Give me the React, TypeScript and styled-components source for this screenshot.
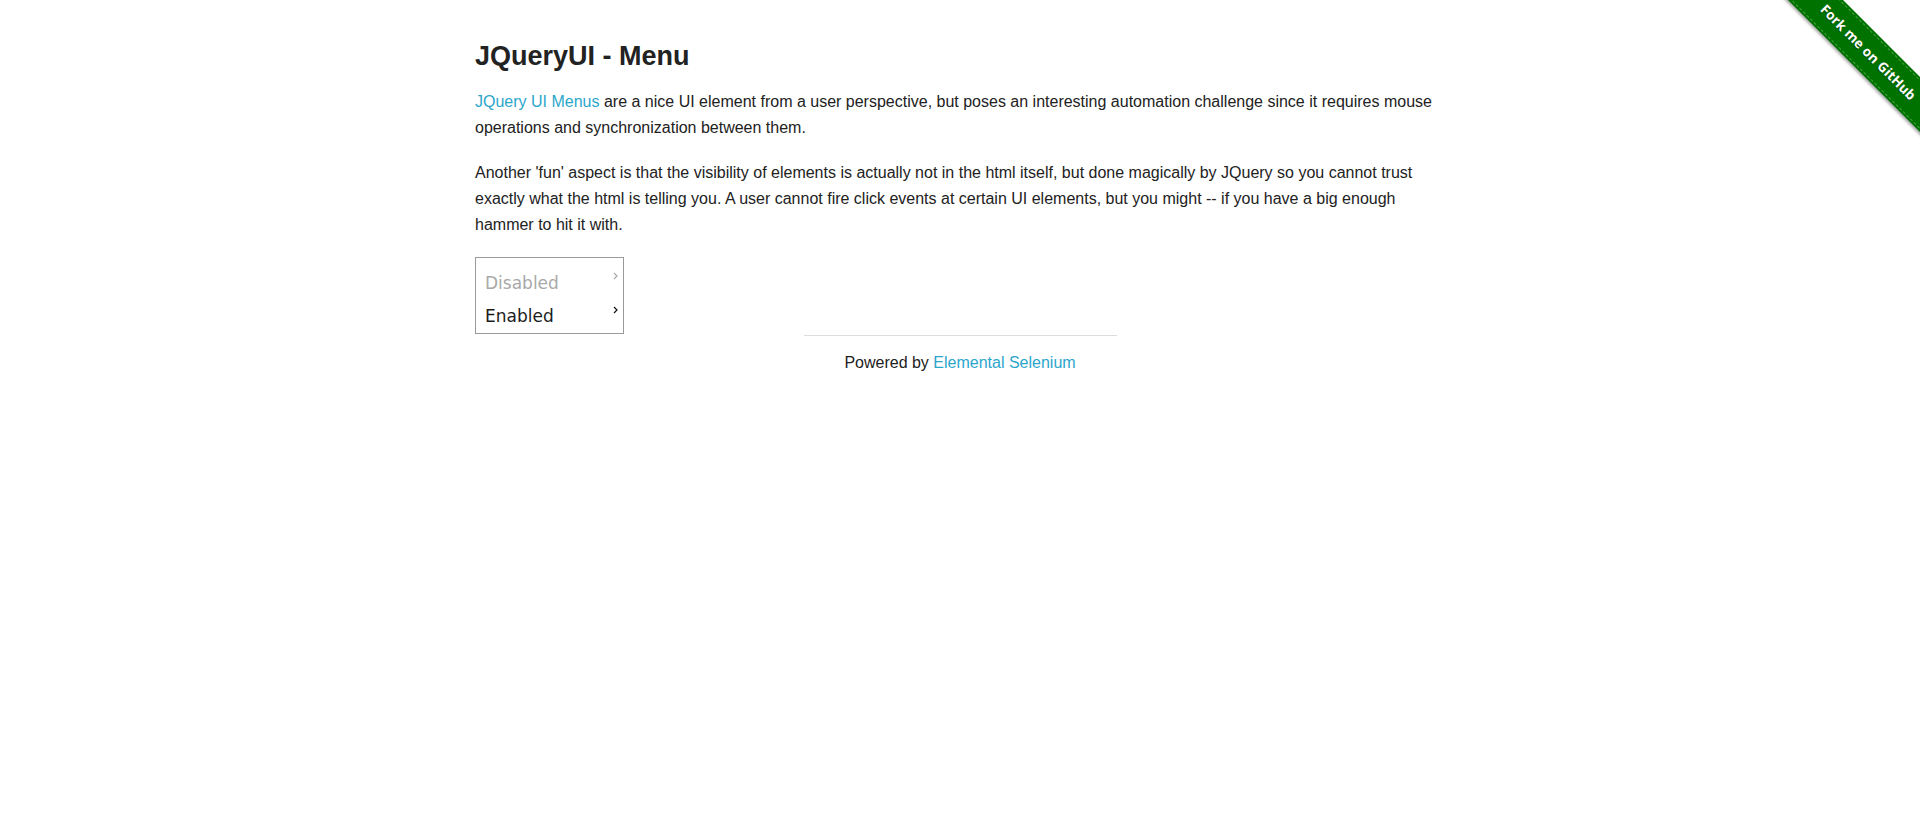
import React from "react";
import styled, { createGlobalStyle } from "styled-components";

const GlobalStyle = createGlobalStyle`
  html, body {
    margin: 0;
    padding: 0;
    background: #ffffff;
  }
  body {
    font-family: "Liberation Sans", Helvetica, Arial, sans-serif;
    color: #222222;
    font-size: 16px;
  }
  * { box-sizing: border-box; }
`;

const Page = styled.div`
  position: relative;
  min-height: 834px;
`;

const Row = styled.div`
  width: 1000px;
  margin: 0 auto;
  padding: 38px 15px 0;
`;

const Title = styled.h3`
  margin: 0 0 13.5px;
  font-size: 27px;
  line-height: 37.8px;
  font-weight: bold;
  color: #222222;
`;

const Para = styled.p`
  margin: 0 0 20px;
  font-size: 16px;
  line-height: 1.6;
  color: #222222;
`;

const Link = styled.a`
  color: #2ba6cb;
  text-decoration: none;
`;

const Menu = styled.ul`
  list-style: none;
  margin: 0;
  width: 149px;
  height: 77px;
  padding: 9px 0 0;
  border: 1px solid #9a9a9a;
  font-family: "DejaVu Sans", Verdana, sans-serif;
`;

const MenuItem = styled.li<{ $disabled?: boolean }>`
  position: relative;
  height: 33px;
  line-height: 33px;
  padding-left: 9px;
  font-size: 17px;
  color: ${(p) => (p.$disabled ? "#a9a9a9" : "#1c1c1c")};
`;

const Caret = styled.svg<{ $top: number }>`
  position: absolute;
  right: 5px;
  top: ${(p) => p.$top}px;
  width: 5px;
  height: 8px;
`;

const Footer = styled.div`
  text-align: center;
`;

const Divider = styled.div`
  width: 313px;
  height: 1px;
  margin: 1px auto 14px;
  background: #dddddd;
`;

const FooterText = styled.div`
  font-size: 16px;
  line-height: 1.6;
  color: #222222;
`;

const RibbonWrap = styled.a`
  position: absolute;
  top: 0;
  right: 0;
  width: 149px;
  height: 149px;
  overflow: hidden;
  text-decoration: none;
`;

const RibbonBand = styled.div`
  position: absolute;
  left: -13px;
  top: 33px;
  width: 220px;
  height: 39px;
  background: #007200;
  transform: rotate(45deg);
  box-shadow: 0 2px 3px rgba(0, 0, 0, 0.35);
  display: flex;
  align-items: center;
  justify-content: center;
  &::before {
    content: "";
    position: absolute;
    left: 0;
    right: 0;
    top: 2px;
    bottom: 2px;
    border-top: 1px dashed rgba(120, 200, 120, 0.55);
    border-bottom: 1px dashed rgba(120, 200, 120, 0.55);
  }
`;

const RibbonText = styled.span`
  position: relative;
  font-family: "Open Sans", "DejaVu Sans", sans-serif;
  font-weight: bold;
  font-size: 13.5px;
  color: #ffffff;
  letter-spacing: 0.1px;
  text-shadow: 0 1px 1px rgba(0, 0, 0, 0.4);
  margin-top: -2px;
`;

function CaretIcon({ top, color }: { top: number; color: string }) {
  return (
    <Caret $top={top} viewBox="0 0 5 8">
      <polyline points="1,1 4,4 1,7" fill="none" stroke={color} strokeWidth="1.2" />
    </Caret>
  );
}

export default function App() {
  return (
    <Page>
      <GlobalStyle />
      <Row>
        <Title>JQueryUI - Menu</Title>
        <Para>
          <Link href="#">JQuery UI Menus</Link> are a nice UI element from a user perspective, but poses an
          interesting automation challenge since it requires mouse operations and synchronization between them.
        </Para>
        <Para>
          Another 'fun' aspect is that the visibility of elements is actually not in the html itself, but done
          magically by JQuery so you cannot trust exactly what the html is telling you. A user cannot fire click
          events at certain UI elements, but you might -- if you have a big enough hammer to hit it with.
        </Para>
        <Menu>
          <MenuItem $disabled>
            Disabled
            <CaretIcon top={5} color="#a9a9a9" />
          </MenuItem>
          <MenuItem>
            Enabled
            <CaretIcon top={6} color="#111111" />
          </MenuItem>
        </Menu>
        <Footer>
          <Divider />
          <FooterText>
            Powered by <Link href="#">Elemental Selenium</Link>
          </FooterText>
        </Footer>
      </Row>
      <RibbonWrap href="#">
        <RibbonBand>
          <RibbonText>Fork me on GitHub</RibbonText>
        </RibbonBand>
      </RibbonWrap>
    </Page>
  );
}
